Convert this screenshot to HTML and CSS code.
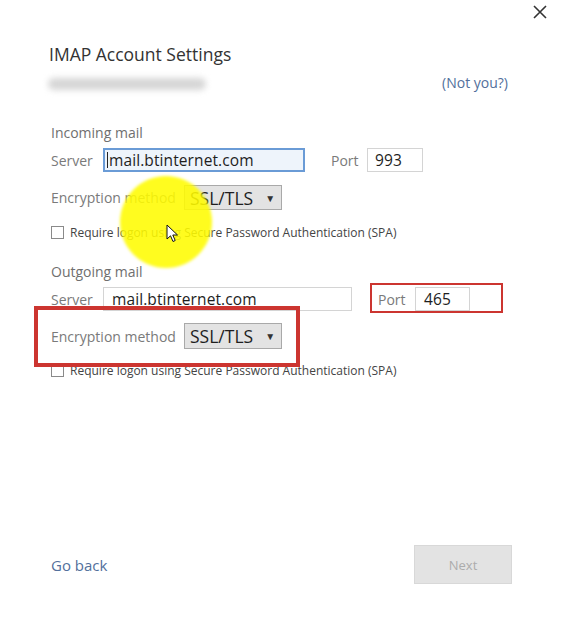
FILE: index.html
```html
<!DOCTYPE html>
<html>
<head>
<meta charset="utf-8">
<link rel="stylesheet" href="styles.css">
</head>
<body>
<div class="dialog">
  <div class="topbar">
    <svg class="close" width="14" height="14" viewBox="0 0 14 14"><path d="M1 1L13 13M13 1L1 13" stroke="#333" stroke-width="1.6" fill="none"/></svg>
  </div>
  <h1 class="title">IMAP Account Settings</h1>
  <div class="account-row">
    <span class="email-blur"></span>
    <a class="link notyou">(Not you?)</a>
  </div>

  <div class="section-label first">Incoming mail</div>
  <div class="field-row">
    <span class="lbl lbl-server">Server</span>
    <span class="input input-focus in-server"><span class="caret"></span>mail.btinternet.com</span>
    <span class="lbl lbl-port">Port</span>
    <span class="input in-port">993</span>
  </div>
  <div class="field-row enc-row">
    <span class="lbl lbl-enc">Encryption method</span>
    <span class="select">SSL/TLS <span class="arrow">▼</span></span>
  </div>
  <div class="check-row">
    <span class="checkbox"></span>
    <span class="check-text">Require logon using Secure Password Authentication (SPA)</span>
  </div>

  <div class="section-label second">Outgoing mail</div>
  <div class="field-row">
    <span class="lbl lbl-server">Server</span>
    <span class="input in-server2">mail.btinternet.com</span>
    <span class="lbl lbl-port2">Port</span>
    <span class="input in-port2">465</span>
  </div>
  <div class="field-row enc-row2">
    <span class="lbl lbl-enc">Encryption method</span>
    <span class="select">SSL/TLS <span class="arrow">▼</span></span>
  </div>
  <div class="check-row check2">
    <span class="checkbox"></span>
    <span class="check-text">Require logon using Secure Password Authentication (SPA)</span>
  </div>

  <div class="footer">
    <a class="link goback">Go back</a>
    <span class="next-btn">Next</span>
  </div>

  <div class="highlight"></div>
  <svg class="cursor" width="13" height="19" viewBox="0 0 13 19"><path d="M1 1L1 15L4.5 11.8L7 17.5L9.2 16.5L6.8 11L11.5 11Z" fill="#fff" stroke="#111" stroke-width="1" stroke-linejoin="round"/></svg>
  <div class="annot annot-port"></div>
  <div class="annot annot-enc"></div>
</div>
</body>
</html>
```
FILE: styles.css
```css
* { box-sizing: border-box; }
html, body { margin: 0; padding: 0; background: #fff; }
body { font-family: "Open Sans", "Noto Sans", sans-serif; color: #333; }

.dialog {
  position: relative;
  width: 561px;
  height: 637px;
  padding: 0 0 53px 51px;
  display: flex;
  flex-direction: column;
  overflow: hidden;
}

.topbar {
  height: 24px;
  display: flex;
  justify-content: flex-end;
  padding: 5px 14px 0 0;
  margin-left: -51px;
}
.close { display: block; }

.title {
  margin: 18px 0 0 -2px;
  font-size: 17.5px;
  line-height: 24px;
  font-weight: 400;
  color: #333;
}

.account-row {
  margin-top: 6px;
  height: 20px;
  display: flex;
  align-items: center;
  justify-content: space-between;
  padding-right: 53px;
}
.email-blur {
  width: 158px;
  height: 12px;
  margin-left: -3px;
  margin-top: 4px;
  border-radius: 6px;
  background: #d6d6d6;
  filter: blur(3px);
}
.link { color: #52709c; text-decoration: none; }
.notyou { font-size: 14px; }

.section-label {
  font-size: 14px;
  line-height: 20px;
  color: #6f6f6f;
}
.section-label.first { margin-top: 31px; }
.section-label.second { margin-top: 23px; }

.field-row {
  display: flex;
  align-items: center;
  margin-top: 5px;
  height: 24px;
}
.lbl { font-size: 14px; color: #7a7a7a; }
.lbl-server { width: 52px; }
.lbl-port { width: 36px; margin-left: 26px; }
.lbl-port2 { width: 37px; margin-left: 26px; }
.lbl-enc { width: 133px; }

.input {
  height: 24px;
  border: 1px solid #d4d4d4;
  background: #fff;
  font-size: 15.5px;
  line-height: 22px;
  padding-left: 5px;
  color: #1e1e1e;
  display: flex;
  align-items: center;
  white-space: nowrap;
  letter-spacing: 0.1px;
}
.input-focus {
  border: 2px solid #6a9bd6;
  background: #eef4fb;
  padding-left: 2px;
}
.caret { width: 1px; height: 16px; background: #222; margin-right: 1px; }
.in-server { width: 202px; }
.in-port { width: 56px; padding-left: 7px; }
.in-server2 { width: 249px; padding-left: 8px; }
.in-port2 { width: 55px; padding-left: 8px; }

.enc-row { margin-top: 13px; height: 25px; }
.enc-row2 { margin-top: 12px; height: 26px; }
.select {
  width: 98px;
  height: 100%;
  border: 1px solid #a9a9a9;
  background: #e3e3e3;
  font-size: 17.5px;
  color: #1e1e1e;
  display: flex;
  align-items: center;
  padding-left: 5px;
}
.arrow { font-size: 10px; margin-left: 12px; color: #333; }

.check-row {
  margin-top: 15px;
  height: 14px;
  display: flex;
  align-items: center;
}
.check2 { margin-top: 14px; }
.checkbox {
  width: 13px;
  height: 13px;
  border: 1px solid #8a8a8a;
  background: #fff;
  margin-right: 6px;
}
.check-text { font-size: 12px; color: #444; white-space: nowrap; }

.footer {
  margin-top: auto;
  display: flex;
  align-items: center;
  justify-content: space-between;
  padding-right: 49px;
}
.goback { font-size: 15px; }
.next-btn {
  width: 98px;
  height: 39px;
  background: #e3e3e3;
  border: 1px solid #d8d8d8;
  color: #acacac;
  font-size: 13px;
  display: flex;
  align-items: center;
  justify-content: center;
}

.highlight {
  position: absolute;
  left: 120px;
  top: 176px;
  width: 92px;
  height: 92px;
  border-radius: 50%;
  background: rgba(255, 252, 0, 0.88);
  filter: blur(1.5px);
}
.cursor { position: absolute; left: 166px; top: 224px; }

.annot { position: absolute; border-style: solid; border-color: #cc3530; }
.annot-port { left: 370px; top: 283px; width: 133px; height: 30px; border-width: 2px; }
.annot-enc { left: 34px; top: 306px; width: 266px; height: 61px; border-width: 4px; }
```
